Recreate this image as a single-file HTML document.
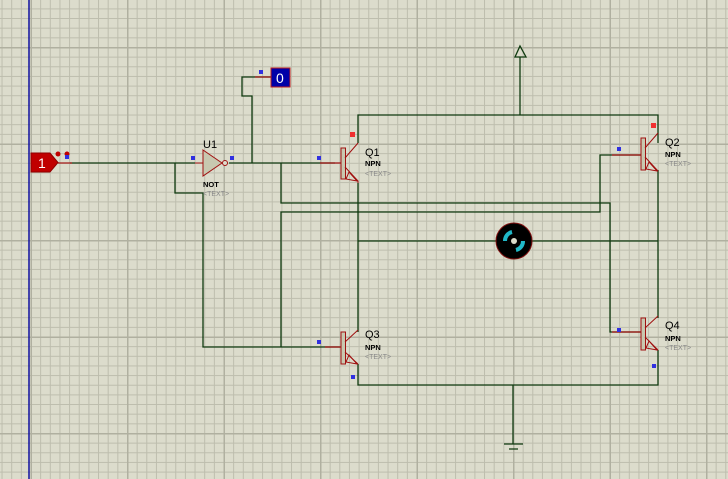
<!DOCTYPE html>
<html><head><style>html,body{margin:0;padding:0;background:#dcdccc;overflow:hidden}svg{display:block}</style></head>
<body>
<svg width="728" height="479" viewBox="0 0 728 479" xmlns="http://www.w3.org/2000/svg" font-family="Liberation Sans, sans-serif">
<defs>
<pattern id="g" x="1.55" y="8.4" width="9.65" height="9.65" patternUnits="userSpaceOnUse">
<path d="M0.5 0V9.65M0 0.5H9.65" stroke="#bdbdad" stroke-width="1" fill="none"/>
</pattern>
<pattern id="G" x="30.5" y="47" width="96.5" height="96.5" patternUnits="userSpaceOnUse">
<path d="M0.5 0V96.5M0 0.5H96.5" stroke="#b0b0a0" stroke-width="2" fill="none"/>
</pattern>
</defs>
<rect width="728" height="479" fill="#dcdccc"/>
<rect width="728" height="479" fill="url(#g)"/>
<rect width="728" height="479" fill="url(#G)"/>
<line x1="29" y1="0" x2="29" y2="479" stroke="#1010a0" stroke-width="1.5"/>

<g stroke="#0f3a0f" stroke-width="1.3" fill="none">
<path d="M70 163H195"/>
<path d="M175 163V193H203V347H340"/>
<path d="M229 163H335"/>
<path d="M271 77H242V96H252V163"/>
<path d="M281 163V203H610V332H641"/>
<path d="M281 347V212H600V155H641"/>
<path d="M358 143V115H658V143"/>
<path d="M520 115V57"/>
<path d="M515 57L520 46L526 57Z"/>
<path d="M358 183V332"/>
<path d="M658 170V318"/>
<path d="M358 241H496M532 241H658"/>
<path d="M358 364V385H658V350"/>
<path d="M513 385V444M504 444H523M509 449H518"/>
</g>
<g stroke="#a01010" stroke-width="1.2" fill="none">
<path d="M58 163H72"/>
<path d="M255 77H271"/>
<path d="M320 163H341M325 347H341M612 155H641M612 332H641"/>
<path d="M496 241H500M528 241H532"/>
</g>
<path d="M31 153H50L58 162.5L50 172H31Z" fill="#c00000" stroke="#900000"/>
<text x="38" y="168" font-size="14" fill="#fff">1</text>
<circle cx="58" cy="154" r="2.5" fill="#c00000"/><circle cx="67" cy="154" r="2.5" fill="#c00000"/>
<rect x="65" y="155" width="4" height="4" fill="#3030e0"/>
<rect x="271" y="68" width="19" height="19" fill="#0000a8" stroke="#c02020"/>
<text x="276" y="83" font-size="14" fill="#fff">0</text>
<rect x="259" y="70" width="4" height="4" fill="#3030e0"/>
<path d="M203 150L222 163L203 176Z" fill="#c8c8b0" stroke="#a01010"/>
<circle cx="225" cy="163" r="2.5" fill="#dcdccc" stroke="#a01010"/>
<path d="M195 163H203" stroke="#a01010"/>
<text x="203" y="148" font-size="11" fill="#000">U1</text>
<text x="203" y="187" font-size="7.5" font-weight="bold" fill="#000">NOT</text>
<text x="203" y="196" font-size="7" fill="#888">&lt;TEXT&gt;</text>
<rect x="191" y="156" width="4" height="4" fill="#3030e0"/>
<rect x="230" y="156" width="4" height="4" fill="#3030e0"/>
<g fill="none" stroke="#a01010" stroke-width="1">
<rect x="341" y="148" width="4.5" height="31" fill="#c8c8b0"/>
<path d="M345 158L358 143M345 167L358 181V183"/>
<path d="M349 172L357 181L346 179Z"/>
<rect x="641" y="138" width="4.5" height="32" fill="#c8c8b0"/>
<path d="M645 148L658 133M645 157L658 171"/>
<path d="M649 162L657 171L646 169Z"/>
<rect x="341" y="332" width="4.5" height="32" fill="#c8c8b0"/>
<path d="M345 342L358 330M345 352L358 364"/>
<path d="M349 355L357 364L346 362Z"/>
<rect x="641" y="318" width="4.5" height="32" fill="#c8c8b0"/>
<path d="M645 328L658 316M645 337L658 350"/>
<path d="M649 341L657 350L646 348Z"/>
</g>
<g font-size="11" fill="#000">
<text x="365" y="156">Q1</text><text x="665" y="146">Q2</text>
<text x="365" y="338">Q3</text><text x="665" y="329">Q4</text>
</g>
<g font-size="7.5" font-weight="bold" fill="#000">
<text x="365" y="166">NPN</text><text x="665" y="157">NPN</text>
<text x="365" y="350">NPN</text><text x="665" y="341">NPN</text>
</g>
<g font-size="7" fill="#888">
<text x="365" y="176">&lt;TEXT&gt;</text><text x="665" y="166">&lt;TEXT&gt;</text>
<text x="365" y="359">&lt;TEXT&gt;</text><text x="665" y="350">&lt;TEXT&gt;</text>
</g>
<rect x="350" y="132" width="5" height="5" fill="#f03030"/>
<rect x="651" y="123" width="5" height="5" fill="#f03030"/>
<g fill="#3030e0">
<rect x="317" y="156" width="4" height="4"/><rect x="617" y="147" width="4" height="4"/>
<rect x="317" y="340" width="4" height="4"/><rect x="617" y="328" width="4" height="4"/>
<rect x="351" y="375" width="4" height="4"/><rect x="652" y="364" width="4" height="4"/>
</g>
<circle cx="514" cy="241" r="18" fill="#000" stroke="#801010"/>
<path d="M505 241A9 9 0 0 1 512 232" stroke="#20b8c8" stroke-width="4" fill="none"/>
<path d="M523 241A9 9 0 0 1 516 250" stroke="#20b8c8" stroke-width="4" fill="none"/>
<circle cx="514" cy="241" r="3" fill="#dcdccc"/>
</svg>
</body></html>
